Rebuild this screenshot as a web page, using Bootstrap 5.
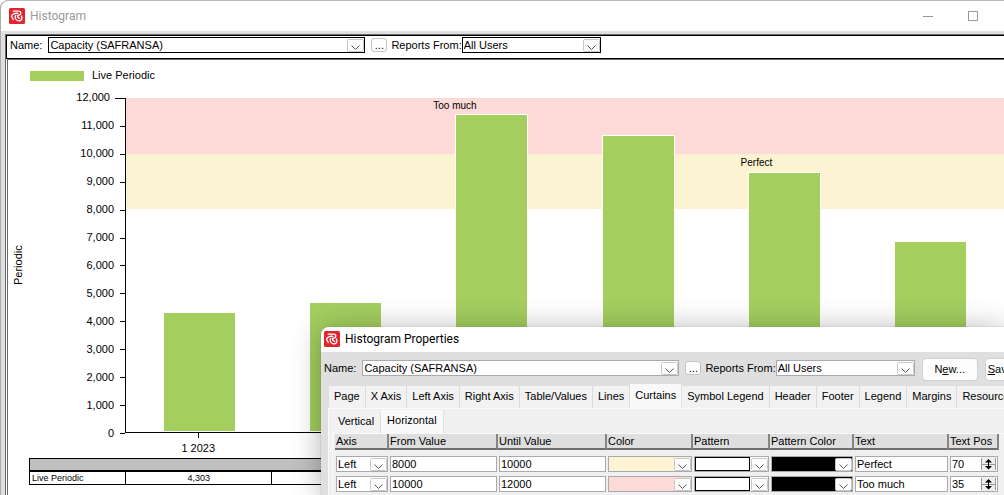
<!DOCTYPE html>
<html lang="en">
<head>
<meta charset="utf-8">
<meta name="viewport" content="width=device-width, initial-scale=1">
<title>Histogram</title>
<link href="https://cdn.jsdelivr.net/npm/bootstrap@5.3.0/dist/css/bootstrap.min.css" rel="stylesheet">
<style>
  :root { --face: #dfdfdf; --bar: #a4cf5f; --edge: #a9a9ae; --chev: url("data:image/svg+xml,%3Csvg xmlns='http://www.w3.org/2000/svg' width='17' height='13'%3E%3Crect x='.5' y='.5' width='16' height='12' rx='1' fill='%23fdfdfd' stroke='%23c8c8c8'/%3E%3Cpath d='M4.5 6.5l4 4 4-4' fill='none' stroke='%23555'/%3E%3C/svg%3E"); }
  body { font: 11px/13px "Liberation Sans", Arial, sans-serif; color: #000; background: #fff; height: 100vh; }
  .main-window { border-top: 1px solid #b8b8b8; border-left: 1px solid #aaa; border-top-left-radius: 8px; background: var(--face); height: 100vh; }
  .caption { font: 12px/16px Roboto, "Open Sans", sans-serif; background: #fff; flex-shrink: 0; }
  .main-window > .caption { height: 30px; color: #999; border-top-left-radius: 8px; padding: 0 26px 1px 8px; }
  .caption-text { margin-left: 5px; }
  .win-btn { width: 10px; height: 10px; }
  .win-btns { gap: 35px; }
  .client { margin: 3px 0 0 4px; border-left: 1px solid #6a6a6a; border-top: 1px solid #6a6a6a; background: #fff; }
  .toolbar { height: 24px; border: solid #000; border-width: 1px 0 1px 1px; padding: 1px 0 5px 3px; }
  .field { appearance: none; display: block; flex-shrink: 0; font: inherit; color: #000; height: 16px; border: 1px solid var(--edge); border-radius: 0; background: #fff; padding: 0 1px; }
  select.field { background: #fff var(--chev) no-repeat right center; padding: 0 18px 0 1px; }
  .toolbar .field { border-color: #000; }
  .name-select { width: 317px; margin-left: 6px; }
  .from-select { width: 139px; }
  .more-btn { width: 16px; height: 14px; flex-shrink: 0; border: 1px solid #c4c4c4; border-radius: 3px; background: #fdfdfd; padding: 0; line-height: 8px; margin: 0 4px 0 6px; }
  .chart-area { border-left: 1px solid #6a6a6a; border-top: 1px solid #6a6a6a; margin-left: 1px; }
  .legend-row { height: 32px; padding: 0 0 1px 22px; }
  .swatch { width: 54px; height: 10px; background: var(--bar); }
  .chart { display: grid; grid-template-columns: 21px 96px minmax(0, 1fr); grid-template-rows: 335px 25px; margin-top: 6px; }
  .axis-title { writing-mode: vertical-rl; transform: rotate(180deg); margin-left: 4px; }
  .y-axis { margin: -14px 0; }
  .y-axis li { flex: 1; padding-right: 11px; position: relative; }
  .y-axis li::after { content: ""; position: absolute; right: 0; top: 50%; width: 5px; height: 1px; background: #000; }
  .y-axis li:first-child { padding-right: 15px; }
  .y-axis li:first-child::after { width: 10px; }
  .plot { border-left: 1px solid #000; border-bottom: 1px solid #000; position: relative; }
  .curtain { font-size: 10px; line-height: 11px; padding-top: 2px; height: 16.67%; }
  .too-much { background: #fcdad7; }
  .perfect { background: #fbf3d2; padding-top: 3px; }
  .bars { position: absolute; inset: 0; }
  .bar { width: 50%; background: var(--bar); border: 1px solid #fff; }
  .x-axis { grid-column: 3; }
  .x-axis li { flex: 1; line-height: 20px; padding-top: 5px; background: linear-gradient(#000, #000) no-repeat center top / 1px 5px; }
  .values { width: calc(100% - 21px); margin-left: 21px; table-layout: fixed; font-size: 9px; line-height: 10px; border-collapse: collapse; }
  .values col:first-child { width: 96px; }
  .values th, .values td { border: 1px solid #000; padding: 1px 2px; font-weight: 400; }
  .values thead th { background: #c0c0c0; border-bottom-width: 2px; height: 12px; padding: 0; }

  .props { position: absolute; left: 321px; right: 0; top: 327px; bottom: 0; background: var(--face); border-top-left-radius: 8px; box-shadow: 0 0 1px #666, 0 2px 30px rgba(0,0,0,.3); }
  .props-inner { height: 100%; overflow: hidden; border-top-left-radius: 8px; }
  .props .caption { height: 25px; padding: 0 0 1px 3px; }
  .props-bar { height: 32px; padding: 0 0 0 3px; flex-shrink: 0; }
  .push { height: 23px; width: 56px; border: 1px solid #d0d0d0; border-radius: 4px; background: #fdfdfd; font: inherit; padding: 0; margin: 3px 0 0 7px; flex-shrink: 0; }
  .push:last-child { padding-left: 2px; text-align: left; }
  .tabs { border: 0; padding-left: 8px; align-items: flex-end; flex-shrink: 0; }
  .tabs .nav-link { border: 0; border-right: 1px solid #dcdcdc; border-radius: 0; margin: 0; background: #f2f2f2; color: #000; padding: 3px 5px 5px; height: 22px; line-height: 14px; white-space: nowrap; }
  .tabs .nav-link.active { background: #f9f9f9; color: #000; height: 24px; }
  .page-tabs { height: 24px; }
  .page-panel { margin-left: 7px; background: #f0f0f0; border: solid #fafafa; border-width: 1px 0 0 1px; padding: 1px 0 0 3px; }
  .sub-tabs { padding-left: 0; height: 23px; }
  .sub-tabs .nav-link { padding: 2px 6px 6px; }
  .sub-panel { border: solid #fafafa; border-width: 1px 0 0 1px; padding: 0 0 0 2px; }
  .grid-table { width: 664px; table-layout: fixed; border-collapse: separate; border-spacing: 0; }
  .w-axis { width: 54px; } .w-value { width: 109px; } .w-color { width: 86px; } .w-pattern { width: 77px; } .w-pcolor { width: 84px; } .w-text { width: 95px; } .w-pos { width: 50px; }
  .grid-table th { font-weight: 400; background: var(--face); height: 16px; border-right: 2px solid #858585; border-bottom: 2px solid #6f6f6f; padding: 0 1px; white-space: nowrap; }
  .grid-table td { padding: 2px 1px; height: 20px; }
  .grid-table tbody tr:first-child td { padding-top: 6px; }
  .grid-table .field { width: 100%; }
  select.c-cream { background-color: #fbf3d2; }
  select.c-pink { background-color: #fcdad7; }
  select.c-black { background-color: #000; }
  select.c-none { background-image: var(--chev), linear-gradient(#000,#000), linear-gradient(#000,#000), linear-gradient(#000,#000), linear-gradient(#000,#000); background-position: right center, 0 0, 0 100%, 0 0, 54px 0; background-size: auto, 55px 1px, 55px 1px, 1px 100%, 1px 100%; }
  .spin { -moz-appearance: textfield; }
  input.spin { background: #fff url("data:image/svg+xml,%3Csvg xmlns='http://www.w3.org/2000/svg' width='16' height='14'%3E%3Crect width='15' height='14' fill='%23eee'/%3E%3Cpath d='M.5 1v12M14.5 1v12M0 7.5h15' stroke='%23999' fill='none'/%3E%3Cpath d='M4 5.5l3.5-3.5L11 5.500zM4 9l3.5 3.5L11 9z'/%3E%3Cpath d='M7.500 3v8' stroke='%23000'/%3E%3C/svg%3E") no-repeat right center; }
  .spin::-webkit-inner-spin-button { -webkit-appearance: none; }
</style>
</head>
<body class="overflow-hidden position-relative">
<svg class="d-none" aria-hidden="true">
  <symbol id="logo" viewBox="0 0 16 16">
    <rect width="16" height="16" rx="1.500" fill="#e3242f"/>
    <g fill="none" stroke="#fff" stroke-width="1.3" stroke-linecap="round" stroke-linejoin="round">
      <path d="M4.200 3.200H9.500C12.500 3.300 12.600 6.600 9.800 7.200L8.300 7.500"/>
      <path d="M8.800 5.300C5.500 5 2.800 6 2.700 8C2.600 9.300 3.800 10 4.200 11.600"/>
      <path d="M6.300 7.600C5.600 9.800 7.200 12.700 9.600 12.900C12.400 13 14 10.200 12.300 8"/>
      <path d="M8.500 7.800C8.600 9.200 9.300 10.200 10.600 10.300"/>
    </g>
  </symbol>
</svg>

<main class="main-window d-flex flex-column overflow-hidden">
  <header class="caption d-flex align-items-center">
    <svg width="16" height="16" class="flex-shrink-0"><use href="#logo"/></svg>
    <span class="caption-text">Histogram</span>
    <div class="win-btns d-flex ms-auto">
      <button class="btn border-0 p-0 d-flex" aria-label="Minimize"><svg class="win-btn"><path d="M0 5.500h10" stroke="#999"/></svg></button>
      <button class="btn border-0 p-0 d-flex" aria-label="Maximize"><svg class="win-btn"><rect x=".5" y=".5" width="9" height="9" fill="none" stroke="#999"/></svg></button>
    </div>
  </header>
  <div class="client flex-grow-1 d-flex flex-column">
    <div class="toolbar d-flex align-items-center">
      <label for="rep">Name:</label>
      <select id="rep" class="field name-select"><option>Capacity (SAFRANSA)</option></select>
      <button class="more-btn">...</button>
      <label for="usr">Reports From:</label>
      <select id="usr" class="field from-select"><option>All Users</option></select>
    </div>
    <section class="chart-area flex-grow-1">
      <div class="legend-row d-flex align-items-center"><span class="swatch me-2"></span>Live Periodic</div>
      <div class="chart">
        <div class="axis-title text-center">Periodic</div>
        <ul class="y-axis list-unstyled d-flex flex-column text-end" id="yAxis"></ul>
        <div class="plot">
          <div class="curtain too-much" style="padding-left:35%">Too much</div>
          <div class="curtain perfect" style="padding-left:70%">Perfect</div>
          <div class="bars d-flex align-items-end" id="bars"></div>
        </div>
        <ul class="x-axis list-unstyled d-flex text-center m-0" id="xAxis"></ul>
      </div>
      <table class="values">
        <colgroup><col><col><col><col><col><col><col></colgroup>
        <thead><tr><th colspan="7"></th></tr></thead>
        <tbody><tr id="vals"><th scope="row">Live Periodic</th></tr></tbody>
      </table>
    </section>
  </div>
</main>

<section class="props" role="dialog" aria-label="Histogram Properties">
  <div class="props-inner d-flex flex-column">
  <header class="caption d-flex align-items-center">
    <svg width="16" height="16"><use href="#logo"/></svg>
    <span class="caption-text text-black">Histogram Properties</span>
  </header>
  <div class="props-bar d-flex align-items-center">
    <label for="rep2">Name:</label>
    <select id="rep2" class="field name-select"><option>Capacity (SAFRANSA)</option></select>
    <button class="more-btn">...</button>
    <label for="usr2" class="text-nowrap flex-shrink-0">Reports From:</label>
    <select id="usr2" class="field from-select"><option>All Users</option></select>
    <button class="push">N<u>e</u>w...</button>
    <button class="push"><u>S</u>ave</button>
  </div>
  <nav class="nav nav-tabs tabs page-tabs flex-nowrap">
    <button class="nav-link">Page</button><button class="nav-link">X Axis</button><button class="nav-link">Left Axis</button><button class="nav-link">Right Axis</button><button class="nav-link">Table/Values</button><button class="nav-link">Lines</button><button class="nav-link active">Curtains</button><button class="nav-link">Symbol Legend</button><button class="nav-link">Header</button><button class="nav-link">Footer</button><button class="nav-link">Legend</button><button class="nav-link">Margins</button><button class="nav-link">Resource</button>
  </nav>
  <div class="page-panel flex-grow-1 d-flex flex-column">
    <nav class="nav nav-tabs tabs sub-tabs"><button class="nav-link">Vertical</button><button class="nav-link active">Horizontal</button></nav>
    <div class="sub-panel flex-grow-1">
      <table class="grid-table">
        <colgroup><col class="w-axis"><col class="w-value"><col class="w-value"><col class="w-color"><col class="w-pattern"><col class="w-pcolor"><col class="w-text"><col class="w-pos"></colgroup>
        <thead><tr><th>Axis</th><th>From Value</th><th>Until Value</th><th>Color</th><th>Pattern</th><th>Pattern Color</th><th>Text</th><th>Text Pos</th></tr></thead>
        <tbody>
          <tr>
            <td><select class="field" aria-label="Axis"><option>Left</option></select></td>
            <td><input class="field" aria-label="From Value" value="8000"></td>
            <td><input class="field" aria-label="Until Value" value="10000"></td>
            <td><select class="field c-cream" aria-label="Color"><option></option></select></td>
            <td><select class="field c-none" aria-label="Pattern"><option></option></select></td>
            <td><select class="field c-black" aria-label="Pattern Color"><option></option></select></td>
            <td><input class="field" aria-label="Text" value="Perfect"></td>
            <td><input type="number" class="field spin" aria-label="Text Pos" value="70"></td>
          </tr>
          <tr>
            <td><select class="field" aria-label="Axis"><option>Left</option></select></td>
            <td><input class="field" aria-label="From Value" value="10000"></td>
            <td><input class="field" aria-label="Until Value" value="12000"></td>
            <td><select class="field c-pink" aria-label="Color"><option></option></select></td>
            <td><select class="field c-none" aria-label="Pattern"><option></option></select></td>
            <td><select class="field c-black" aria-label="Pattern Color"><option></option></select></td>
            <td><input class="field" aria-label="Text" value="Too much"></td>
            <td><input type="number" class="field spin" aria-label="Text Pos" value="35"></td>
          </tr>
        </tbody>
      </table>
    </div>
  </div>
  </div>
</section>

<script src="https://cdn.jsdelivr.net/npm/bootstrap@5.3.0/dist/js/bootstrap.bundle.min.js"></script>
<script>
  const axisMax = 12000, data = [4303, 4660, 11420, 10680, 9330, 6850];
  const periods = ['1 2023', '', '', '', '', ''], values = ['4,303', '', '', '', '', ''];
  const add = (id, html) => document.getElementById(id).insertAdjacentHTML('beforeend', html);
  for (let v = axisMax; v >= 0; v -= 1000)
    add('yAxis', `<li class="d-flex align-items-center justify-content-end">${v.toLocaleString('en-US')}</li>`);
  data.forEach((v, i) => {
    add('bars', `<div class="flex-fill h-100 d-flex align-items-end justify-content-center"><div class="bar" style="height:${v / axisMax * 100}%"></div></div>`);
    add('xAxis', `<li>${periods[i]}</li>`);
    add('vals', `<td class="text-center">${values[i]}</td>`);
  });
</script>
</body>
</html>
